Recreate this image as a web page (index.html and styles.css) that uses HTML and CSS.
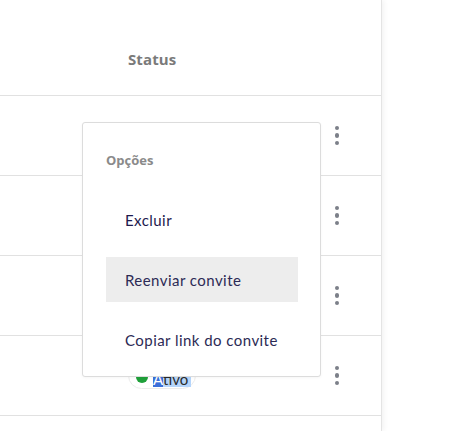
FILE: index.html
```html
<!DOCTYPE html>
<html lang="pt-BR">
<head>
<meta charset="utf-8">
<title>Membros</title>
<link rel="stylesheet" href="styles.css">
</head>
<body>
<div class="page">
  <div class="table">
    <div class="thead">
      <div class="th-spacer"></div>
      <div class="th">Status</div>
    </div>
    <div class="row"><div class="status"></div><button class="kebab" aria-label="Mais opções"><span></span><span></span><span></span></button></div>
    <div class="row"><div class="status"></div><button class="kebab" aria-label="Mais opções"><span></span><span></span><span></span></button></div>
    <div class="row"><div class="status"></div><button class="kebab" aria-label="Mais opções"><span></span><span></span><span></span></button></div>
    <div class="row"><div class="status"><span class="pill"><span class="dot"></span><span class="pill-text"><span class="sel-a">A</span><span class="sel">tivo</span></span></span></div><button class="kebab" aria-label="Mais opções"><span></span><span></span><span></span></button></div>
    <div class="row last"></div>

    <div class="menu">
      <div class="menu-title">Opções</div>
      <ul class="menu-list">
        <li class="menu-item excluir">Excluir</li>
        <li class="menu-item active">Reenviar convite</li>
        <li class="menu-item">Copiar link do convite</li>
      </ul>
    </div>
  </div>
  <div class="side"></div>
</div>
</body>
</html>
```
FILE: styles.css
```css
* { box-sizing: border-box; }
html, body { margin: 0; padding: 0; background: #fff; }
body { font-family: Lato, "Open Sans", sans-serif; width: 467px; height: 431px; overflow: hidden; }

.page { display: flex; height: 431px; }

.table {
  position: relative;
  width: 382px;
  height: 431px;
  flex: none;
  overflow: hidden;
  border-right: 1px solid #e4e4e4;
  box-shadow: 2px 0 5px rgba(0,0,0,0.05);
}
.side { flex: 1; background: #fff; }

.thead { display: flex; height: 95px; align-items: center; padding-top: 22px; }
.th-spacer { width: 128px; }
.th { font-family: "Open Sans", Lato, sans-serif; font-size: 15px; font-weight: 700; color: #7a7a7a; letter-spacing: 0.1px; }

.row {
  display: flex;
  align-items: center;
  height: 80px;
  border-top: 1px solid #e1e1e1;
  padding-left: 128px;
}
.row.last { height: 16px; }
.status { width: 199px; height: 26px; display: flex; align-items: center; }
.kebab {
  margin-left: 4px;
  width: 12px;
  padding: 0;
  border: 0;
  background: none;
  display: flex;
  flex-direction: column;
  align-items: center;
  gap: 3px;
}
.kebab span { width: 4.5px; height: 4.5px; border-radius: 50%; background: #7c8089; display: block; }

.pill {
  display: inline-flex;
  align-items: center;
  gap: 5px;
  height: 27px;
  margin-top: 0;
  padding: 0 4px 0 7px;
  border: 1px solid #ececec;
  border-radius: 14px;
  font-size: 15px;
  color: #2b2b2b;
}
.dot { width: 12px; height: 12px; border-radius: 50%; background: #1fa03a; margin-top: 2px; }
.pill-text { display: inline-flex; line-height: 16px; margin-top: 4px; }
.sel-a { background: #3b6fd9; color: #fff; padding-top: 2px; width: 10px; }
.sel { background: #b5d5fb; padding: 2px 1px 0 0; width: 28px; }

.menu {
  position: absolute;
  left: 82px;
  top: 122px;
  width: 239px;
  height: 255px;
  background: #fff;
  border: 1px solid #dcdcdc;
  border-radius: 3px;
  box-shadow: 0 1px 3px rgba(0,0,0,0.04);
  padding: 0 22px 0 23px;
}
.menu-title {
  height: 74px;
  padding-top: 28px;
  font-family: "Open Sans", Lato, sans-serif;
  font-size: 13px;
  font-weight: 700;
  color: #8a8a8a;
  line-height: 18px;
}
.menu-list { list-style: none; margin: 0; padding: 0; display: flex; flex-direction: column; gap: 15px; }
.menu-item {
  height: 45px;
  display: flex;
  align-items: center;
  padding-left: 19px;
  font-size: 15px;
  letter-spacing: 0.45px;
  color: #2c2a55;
}
.menu-item.excluir { color: #1d1a4e; }
.menu-item.active { background: #ededed; }
```
